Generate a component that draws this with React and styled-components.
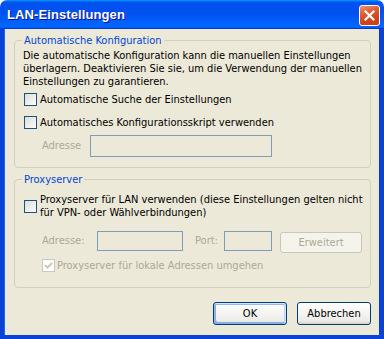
import React from "react";
import styled, { createGlobalStyle } from "styled-components";

const Global = createGlobalStyle`
  html, body { margin: 0; padding: 0; background: #fff; }
  body { font-family: "DejaVu Sans Condensed", "Liberation Sans", sans-serif; font-size: 11px; }
`;

const Window = styled.div`
  width: 384px;
  height: 339px;
  display: flex;
  flex-direction: column;
  box-sizing: border-box;
`;

const TitleBar = styled.div`
  height: 29px;
  flex: none;
  display: flex;
  align-items: center;
  justify-content: space-between;
  padding: 0 4px 0 7px;
  border-radius: 7px 7px 0 0;
  background: linear-gradient(180deg, #0997ff, #0053ee 8%, #0050ee 40%, #06f 88%, #06f 93%, #005bff 95%, #003dd7 96%, #003dd7);
`;

const Title = styled.span`
  font-family: "Liberation Sans", sans-serif;
  font-weight: bold;
  font-size: 13px;
  color: #fff;
  text-shadow: 1px 1px #0f1089;
  letter-spacing: 0.1px;
`;

const CloseButton = styled.div`
  width: 21px;
  height: 21px;
  box-sizing: border-box;
  border: 1px solid #fff;
  border-radius: 3px;
  background: linear-gradient(160deg, #f0936f 0%, #e05b34 35%, #d2421a 70%, #c9431c 100%);
  display: flex;
  align-items: center;
  justify-content: center;
  margin-top: 1px;
`;

const Frame = styled.div`
  flex: 1;
  display: flex;
  flex-direction: column;
  border: 4px solid #0842d6;
  border-top: none;
  box-shadow: inset 1px 0 #166aee, inset -1px 0 #0a3ac8;
  background: #ece9d8;
  padding: 5px 9px 0 10px;
  box-sizing: border-box;
`;

const Group = styled.fieldset`
  margin: ${(p) => (p.$first ? "0" : "5px")} 0 0 0;
  padding: 0 8px ${(p) => p.$pb}px 8px;
  border: 1px solid #d0d0bf;
  border-radius: 4px;
  min-width: 0;
`;

const Legend = styled.legend`
  color: #0046d5;
  padding: 0 2px;
  margin-left: -1px;
  line-height: 13px;
`;

const Para = styled.div`
  line-height: 13px;
  margin-top: 2px;
  color: #000;
  white-space: nowrap;
`;

const CheckRow = styled.label`
  display: flex;
  align-items: center;
  gap: ${(p) => p.$gap ?? 3}px;
  margin-top: ${(p) => p.$mt}px;
  padding-left: ${(p) => p.$indent ?? 1}px;
  line-height: 13px;
  color: ${(p) => (p.$disabled ? "#aca899" : "#000")};
  white-space: nowrap;
`;

const Box = styled.span`
  width: 13px;
  height: 13px;
  flex: none;
  box-sizing: border-box;
  border: 1px solid ${(p) => (p.$disabled ? "#cac8bb" : "#1c5180")};
  background: ${(p) =>
    p.$disabled ? "#fff" : "linear-gradient(135deg, #dcdcd7 0%, #fdfdfc 100%)"};
  display: flex;
  align-items: center;
  justify-content: center;
`;

const FieldRow = styled.div`
  display: flex;
  align-items: flex-start;
  margin-top: ${(p) => p.$mt}px;
  padding-left: 19px;
`;

const FieldLabel = styled.span`
  width: ${(p) => p.$w}px;
  margin-left: ${(p) => p.$ml ?? 0}px;
  flex: none;
  color: #aca899;
  line-height: ${(p) => p.$h}px;
`;

const Input = styled.div`
  width: ${(p) => p.$w}px;
  height: ${(p) => p.$h}px;
  box-sizing: border-box;
  border: 1px solid #7f9db9;
  background: #ece9d8;
  flex: none;
`;

const Button = styled.div`
  width: ${(p) => p.$w}px;
  height: ${(p) => p.$h}px;
  box-sizing: border-box;
  border: 1px solid ${(p) => (p.$disabled ? "#c9c7ba" : "#003c74")};
  border-radius: 3px;
  background: ${(p) =>
    p.$disabled ? "#f5f4ea" : "linear-gradient(180deg, #fff, #ecebe6 86%, #d6d0c5)"};
  color: ${(p) => (p.$disabled ? "#aca899" : "#000")};
  display: flex;
  align-items: center;
  justify-content: center;
  flex: none;
  margin-left: ${(p) => p.$ml ?? 0}px;
  margin-top: ${(p) => p.$mt ?? 0}px;
  box-shadow: ${(p) =>
    p.$default
      ? "inset -1px 1px #cee7ff, inset 1px 2px #98b8ea, inset -2px 2px #bcd4f6, inset 1px -1px #89ade4, inset 2px -2px #89ade4"
      : "none"};
`;

const ButtonBar = styled.div`
  display: flex;
  justify-content: flex-end;
  gap: 10px;
  margin-top: 14px;
`;

const Check = ({ disabled, checked }) => (
  <Box $disabled={disabled}>
    {checked && (
      <svg width="9" height="9" viewBox="0 0 9 9">
        <path d="M1 4 L3.5 6.5 L8 2" fill="none" stroke={disabled ? "#cac8bb" : "#21a121"} strokeWidth="2" />
      </svg>
    )}
  </Box>
);

export default function App() {
  return (
    <>
      <Global />
      <Window>
        <TitleBar>
          <Title>LAN-Einstellungen</Title>
          <CloseButton>
            <svg width="11" height="11" viewBox="0 0 11 11">
              <path d="M1.5 1.5 L9.5 9.5 M9.5 1.5 L1.5 9.5" stroke="#fff" strokeWidth="2.2" strokeLinecap="square" />
            </svg>
          </CloseButton>
        </TitleBar>
        <Frame>
          <Group $first $pb={10}>
            <Legend>Automatische Konfiguration</Legend>
            <Para>
              Die automatische Konfiguration kann die manuellen Einstellungen
              <br />
              überlagern. Deaktivieren Sie sie, um die Verwendung der manuellen
              <br />
              Einstellungen zu garantieren.
            </Para>
            <CheckRow $mt={5}>
              <Check />
              Automatische Suche der Einstellungen
            </CheckRow>
            <CheckRow $mt={10}>
              <Check />
              Automatisches Konfigurationsskript verwenden
            </CheckRow>
            <FieldRow $mt={6}>
              <FieldLabel $w={48} $h={22}>Adresse</FieldLabel>
              <Input $w={182} $h={22} />
            </FieldRow>
          </Group>
          <Group $pb={15}>
            <Legend>Proxyserver</Legend>
            <CheckRow $mt={7}>
              <Check />
              <span>
                Proxyserver für LAN verwenden (diese Einstellungen gelten nicht
                <br />
                für VPN- oder Wählverbindungen)
              </span>
            </CheckRow>
            <FieldRow $mt={12}>
              <FieldLabel $w={55} $h={20}>Adresse:</FieldLabel>
              <Input $w={86} $h={20} />
              <FieldLabel $w={29} $ml={12} $h={20}>Port:</FieldLabel>
              <Input $w={48} $h={20} />
              <Button $disabled $w={82} $h={21} $ml={8} $mt={1}>Erweitert</Button>
            </FieldRow>
            <CheckRow $mt={6} $indent={19} $gap={2} $disabled>
              <Check disabled checked />
              Proxyserver für lokale Adressen umgehen
            </CheckRow>
          </Group>
          <ButtonBar>
            <Button $default $w={74} $h={23}>OK</Button>
            <Button $w={74} $h={23}>Abbrechen</Button>
          </ButtonBar>
        </Frame>
      </Window>
    </>
  );
}
